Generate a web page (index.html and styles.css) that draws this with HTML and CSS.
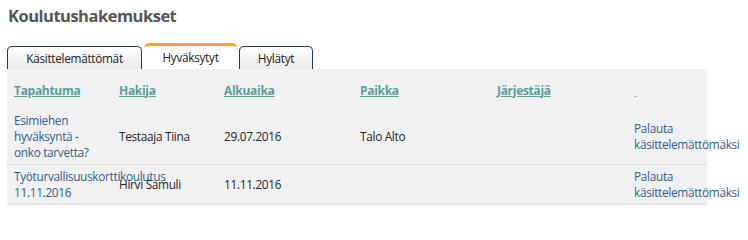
FILE: index.html
```html
<!DOCTYPE html>
<html>
<head>
<meta charset="utf-8">
<link rel="stylesheet" href="styles.css">
</head>
<body>
<h1 class="title">Koulutushakemukset</h1>
<div class="tabs">
  <a class="tab">Käsittelemättömät</a>
  <a class="tab active">Hyväksytyt</a>
  <a class="tab">Hylätyt</a>
</div>
<div class="panel">
  <table class="grid">
    <colgroup>
      <col class="c1"><col class="c2"><col class="c3"><col class="c4"><col class="c5"><col class="c6">
    </colgroup>
    <thead>
      <tr>
        <th><a href="#">Tapahtuma</a></th>
        <th><a href="#">Hakija</a></th>
        <th><a href="#">Alkuaika</a></th>
        <th><a href="#">Paikka</a></th>
        <th><a href="#">Järjestäjä</a></th>
        <th><a href="#" class="blank">&nbsp;</a></th>
      </tr>
    </thead>
    <tbody>
      <tr>
        <td><a href="#" class="link">Esimiehen hyväksyntä - onko tarvetta?</a></td>
        <td>Testaaja Tiina</td>
        <td>29.07.2016</td>
        <td>Talo Alto</td>
        <td></td>
        <td><a href="#" class="link">Palauta käsittelemättömäksi</a></td>
      </tr>
      <tr>
        <td><a href="#" class="link">Työturvallisuuskorttikoulutus 11.11.2016</a></td>
        <td>Hirvi Samuli</td>
        <td>11.11.2016</td>
        <td></td>
        <td></td>
        <td><a href="#" class="link">Palauta käsittelemättömäksi</a></td>
      </tr>
    </tbody>
  </table>
</div>
</body>
</html>
```

FILE: styles.css
```css
* { box-sizing: border-box; }
body {
  margin: 0;
  padding: 0 0 0 7px;
  background: #ffffff;
  font-family: "Open Sans", "Noto Sans", sans-serif;
  font-size: 11.8px;
  letter-spacing: -0.3px;
  color: #222222;
}
.title {
  margin: 0;
  padding: 4px 0 0 1px;
  height: 42px;
  font-size: 16.5px;
  font-weight: 700;
  color: #555555;
  letter-spacing: -0.5px;
}
.tabs {
  display: flex;
  align-items: flex-end;
  gap: 2px;
  height: 27px;
}
.tab {
  display: flex;
  align-items: center;
  justify-content: center;
  height: 23px;
  border: 1px solid #1f3a58;
  border-bottom: none;
  border-radius: 5px 5px 0 0;
  background: linear-gradient(#ffffff, #e9e9e9);
  color: #222;
}
.tab:nth-child(1) { width: 135px; }
.tab:nth-child(2) { width: 93px; }
.tab:nth-child(3) { width: 74px; }
.tab.active {
  height: 26px;
  background: #ffffff;
  border: none;
  border-top: 3px solid #f0a43a;
  padding-bottom: 1px;
}
.panel {
  width: 700px;
  background: #f1f1f1;
}
.grid {
  width: 700px;
  table-layout: fixed;
  border-collapse: collapse;
}
.c1 { width: 105px; }
.c2 { width: 105px; }
.c3 { width: 136px; }
.c4 { width: 137px; }
.c5 { width: 137px; }
.c6 { width: 80px; }
th {
  text-align: left;
  height: 39px;
  padding: 3px 7px 0;
  vertical-align: middle;
}
th a {
  color: #5a9e9e;
  font-weight: 700;
  font-size: 12px;
  letter-spacing: -0.3px;
  text-decoration: underline;
}
th a.blank { color: #9fbcbc; font-weight: 400; }
td {
  padding: 3px 7px 3px;
  line-height: 16px;
  vertical-align: middle;
  border-bottom: 1px solid #dcdcdc;
}
td:last-child { white-space: nowrap; }
td:last-child .link { white-space: normal; display: inline-block; width: 80px; }
.link {
  color: #2f5f8c;
  text-decoration: none;
}
tbody tr:first-child td { height: 56px; }
tbody tr:nth-child(2) td { height: 40px; }
```
